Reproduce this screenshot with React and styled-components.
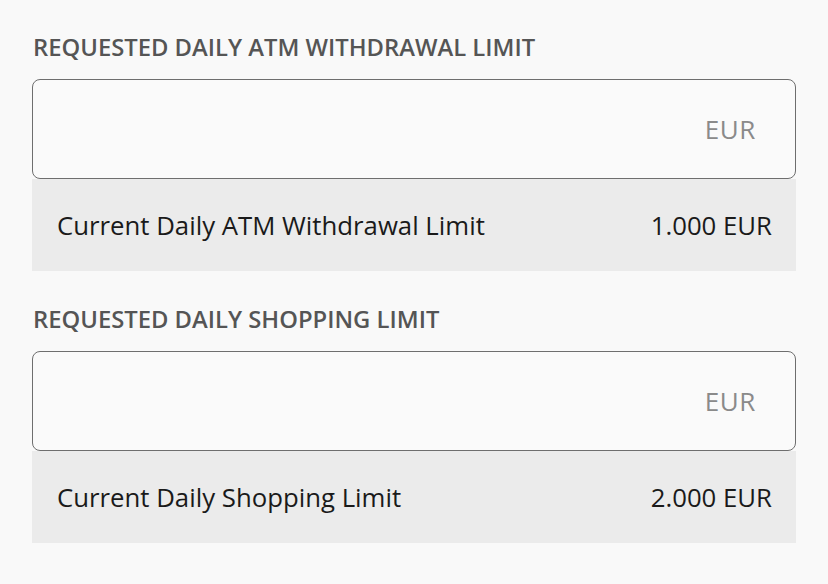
import React from 'react'
import styled, { createGlobalStyle } from 'styled-components'

const GlobalStyle = createGlobalStyle`
  html, body {
    margin: 0;
    background: #f9f9f9;
    font-family: "Open Sans", "Noto Sans", sans-serif;
  }
`

const Page = styled.div`
  display: flex;
  flex-direction: column;
  gap: 33px;
  padding: 32px 32px 0 32px;
`

const Section = styled.section`
  display: flex;
  flex-direction: column;
`

const Label = styled.label`
  font-size: 23.8px;
  font-weight: 600;
  color: #555;
  line-height: 30px;
  margin-bottom: 17px;
  padding-left: 1px;
`

const InputBox = styled.div`
  display: flex;
  align-items: center;
  justify-content: flex-end;
  height: 98px;
  border: 1px solid #6e6e6e;
  border-radius: 8px;
  background: #fafafa;
  padding: 0 39px 0 24px;
`

const Input = styled.input`
  flex: 1;
  border: none;
  background: transparent;
  outline: none;
  font: inherit;
  font-size: 26px;
`

const Unit = styled.span`
  font-size: 26px;
  letter-spacing: 0.6px;
  color: #8a8a8a;
`

const CurrentRow = styled.div`
  display: flex;
  align-items: center;
  justify-content: space-between;
  height: 92px;
  background: #ebebeb;
  padding: 0 24px 0 25px;
  font-size: 25.75px;
  color: #1a1a1a;
`

const limits = [
  { label: 'REQUESTED DAILY ATM WITHDRAWAL LIMIT', current: 'Current Daily ATM Withdrawal Limit', value: '1.000 EUR' },
  { label: 'REQUESTED DAILY SHOPPING LIMIT', current: 'Current Daily Shopping Limit', value: '2.000 EUR' },
]

export default function App() {
  return (
    <>
      <GlobalStyle />
      <Page>
        {limits.map((l) => (
          <Section key={l.label}>
            <Label>{l.label}</Label>
            <InputBox>
              <Input type="text" />
              <Unit>EUR</Unit>
            </InputBox>
            <CurrentRow>
              <span>{l.current}</span>
              <span>{l.value}</span>
            </CurrentRow>
          </Section>
        ))}
      </Page>
    </>
  )
}
